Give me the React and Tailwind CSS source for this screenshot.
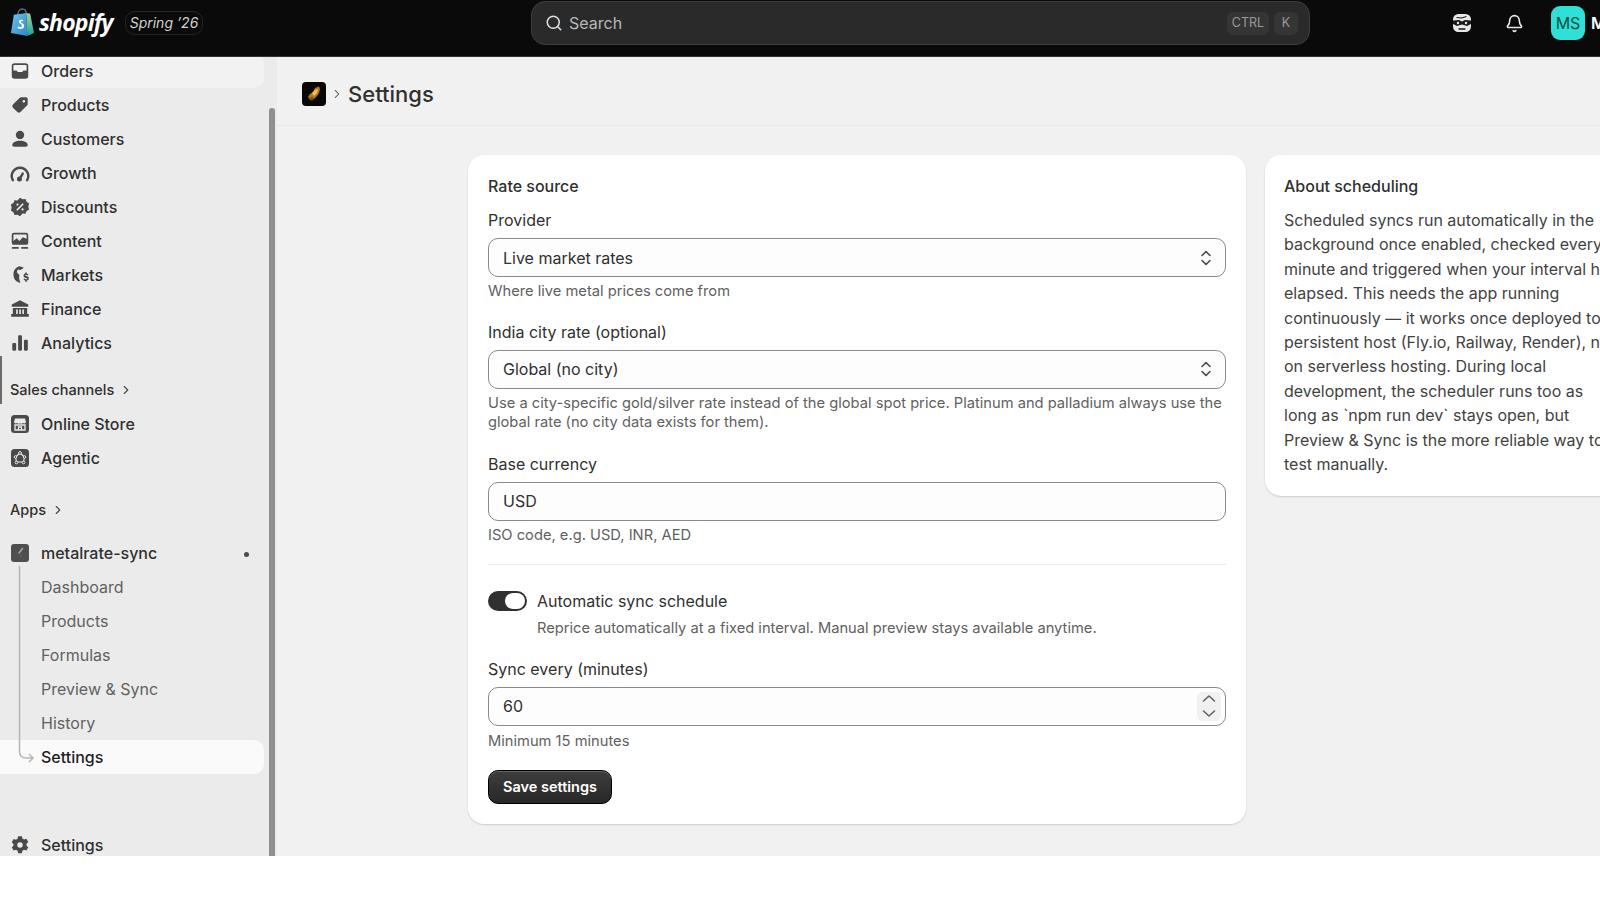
import React from 'react';
import { Search, Bell, ChevronRight } from 'lucide-react';

const ic = 'w-[22px] h-[22px] shrink-0 text-[#4a4a4a]';

const OrdersIcon = () => (
  <svg viewBox="0 0 20 20" className={ic} fill="currentColor">
    <path fillRule="evenodd" d="M5 3h10a2.500 2.500 0 0 1 2.500 2.500v9A2.500 2.500 0 0 1 15 17H5a2.500 2.500 0 0 1-2.500-2.500v-9A2.500 2.500 0 0 1 5 3Zm-1 6.500v-4A1 1 0 0 1 5 4.500h10a1 1 0 0 1 1 1v4h-2.500a1 1 0 0 0-.9.6l-.4.9H7.800l-.4-.9a1 1 0 0 0-.9-.6H4Z" />
  </svg>
);
const TagIcon = () => (
  <svg viewBox="0 0 20 20" className={ic} fill="currentColor">
    <path fillRule="evenodd" d="M11 3h4.500A1.500 1.500 0 0 1 17 4.500V9a2 2 0 0 1-.6 1.400l-6 6a2 2 0 0 1-2.800 0l-4-4a2 2 0 0 1 0-2.800l6-6A2 2 0 0 1 11 3Zm2.500 2.500a1.200 1.200 0 1 0 0 2.400 1.200 1.200 0 0 0 0-2.400Z" />
  </svg>
);
const PersonIcon = () => (
  <svg viewBox="0 0 20 20" className={ic} fill="currentColor">
    <circle cx="10" cy="6.300" r="3.800" />
    <path d="M3 15.500c0-2.600 3-4 7-4s7 1.400 7 4c0 1-.8 1.500-1.700 1.500H4.700C3.800 17 3 16.500 3 15.500Z" />
  </svg>
);
const GrowthIcon = () => (
  <svg viewBox="0 0 20 20" className={ic} fill="none" stroke="currentColor" strokeWidth="2.200" strokeLinecap="round">
    <path d="M3.500 16.500a7.500 7.500 0 1 1 13 0" />
    <path d="M9.500 15.500l3-5" />
    <circle cx="9.500" cy="15.500" r="1.200" fill="currentColor" />
  </svg>
);
const DiscountIcon = () => (
  <svg viewBox="0 0 20 20" className={ic}>
    <path fill="currentColor" d="M10 1.500l2.300 1.500 2.700-.2 1 2.500 2.300 1.500-.7 2.700.7 2.700-2.300 1.500-1 2.500-2.700-.2L10 18.500l-2.300-1.500-2.700.2-1-2.500-2.300-1.500.7-2.700-.7-2.700 2.300-1.500 1-2.500 2.700.2L10 1.500Z" />
    <path d="M7.500 12.500l5-5" stroke="#ebebeb" strokeWidth="1.500" strokeLinecap="round" />
    <circle cx="7.700" cy="7.800" r="1" fill="#ebebeb" />
    <circle cx="12.300" cy="12.200" r="1" fill="#ebebeb" />
  </svg>
);
const ContentIcon = () => (
  <svg viewBox="0 0 20 20" className={ic} fill="currentColor">
    <path fillRule="evenodd" d="M4.500 2.500h11A2 2 0 0 1 17.500 4.500v7a2 2 0 0 1-2 2h-11a2 2 0 0 1-2-2v-7a2 2 0 0 1 2-2Zm-.5 7.500 3-2.500 2.500 2.500 3-3.500L16 8V4.500a.5.5 0 0 0-.5-.5h-11a.5.5 0 0 0-.5.500V10Z" />
    <rect x="2.500" y="15.500" width="6.500" height="1.600" rx=".8" />
    <rect x="11" y="15.500" width="6.500" height="1.600" rx=".8" />
  </svg>
);
const MarketsIcon = () => (
  <svg viewBox="0 0 20 20" className={ic} fill="currentColor">
    <path d="M9 2a8 8 0 0 1 4.500 1.400l-3 2.100-2.500-.5-1 2.500 2.500 2.500c-.6 1.800-.4 4 .8 6.500-.3.300-.5.500-.8.500A8 8 0 0 1 9 2Z" />
    <path d="M15.500 7.500c.4 0 .7.300.7.700v.6c.9.200 1.500.8 1.700 1.500h-1.500c-.2-.3-.5-.5-.9-.5-.5 0-.8.200-.8.500 0 .8 3.300.4 3.300 2.800 0 1-.7 1.700-1.800 1.900v.6a.7.7 0 0 1-1.400 0v-.6c-.9-.2-1.500-.8-1.700-1.600h1.500c.2.300.5.500 1 .500s.9-.2.900-.6c0-1-3.300-.3-3.300-2.700 0-.9.700-1.700 1.600-1.900v-.5c0-.4.300-.7.700-.7Z" />
  </svg>
);
const BankIcon = () => (
  <svg viewBox="0 0 20 20" className={ic} fill="currentColor">
    <path d="M10 2l7.500 3.800V8h-15V5.800L10 2Z" />
    <path fillRule="evenodd" d="M3.500 9h13v5.500H18V17H2v-2.500h1.500V9Zm3 1.500v4h1.500v-4H6.500Zm2.800 0v4h1.500v-4H9.300Zm2.800 0v4h1.500v-4h-1.500Z" />
  </svg>
);
const BarsIcon = () => (
  <svg viewBox="0 0 20 20" className={ic} fill="currentColor">
    <rect x="3" y="10" width="3.500" height="7" rx="1" />
    <rect x="8.300" y="3" width="3.500" height="14" rx="1" />
    <rect x="13.600" y="7" width="3.500" height="10" rx="1" />
  </svg>
);
const StoreIcon = () => (
  <svg viewBox="0 0 20 20" className="w-5 h-5 shrink-0 text-[#4a4a4a]">
    <rect x="1" y="1" width="18" height="18" rx="3.500" fill="currentColor" />
    <path d="M5 4.500h10l1 3.500a1.800 1.800 0 0 1-3 1 2.400 2.400 0 0 1-3 .2 2.400 2.400 0 0 1-3-.2 1.800 1.800 0 0 1-3-1l1-3.500Z" fill="#ebebeb" />
    <path d="M5 11h10v5H5z" fill="none" stroke="#ebebeb" strokeWidth="1.300" />
    <path d="M8.500 16v-3h3v3" fill="none" stroke="#ebebeb" strokeWidth="1.300" />
  </svg>
);
const AgenticIcon = () => (
  <svg viewBox="0 0 20 20" className="w-5 h-5 shrink-0 text-[#4a4a4a]">
    <rect x="1" y="1" width="18" height="18" rx="3.500" fill="currentColor" />
    <path d="M10 5l4.500 4-1 5h-7l-1-5L10 5Z" fill="none" stroke="#ebebeb" strokeWidth="1.100" />
    <circle cx="10" cy="5" r="1.400" fill="#4a4a4a" stroke="#ebebeb" />
    <circle cx="14.500" cy="9" r="1.300" fill="#4a4a4a" stroke="#ebebeb" />
    <circle cx="5.500" cy="9" r="1.300" fill="#4a4a4a" stroke="#ebebeb" />
    <circle cx="13.500" cy="14.500" r="1.300" fill="#4a4a4a" stroke="#ebebeb" />
    <circle cx="6.500" cy="14.500" r="1.300" fill="#4a4a4a" stroke="#ebebeb" />
  </svg>
);
const AppIcon = () => (
  <svg viewBox="0 0 20 20" className="w-5 h-5 shrink-0">
    <rect x="1" y="1" width="18" height="18" rx="3" fill="#4f4f4f" />
    <path d="M12.500 5.500L9 10" stroke="#a8a8a8" strokeWidth="1.500" strokeLinecap="round" />
    <circle cx="11" cy="13" r=".8" fill="#777" />
  </svg>
);
const GearIcon = () => (
  <svg viewBox="0 0 20 20" className={ic} fill="currentColor">
    <path fillRule="evenodd" d="M8.300 2h3.400l.5 2.200 1.500.9 2.100-.7 1.700 2.900-1.600 1.500v1.800l1.600 1.500-1.700 2.900-2.100-.7-1.500.9-.5 2.300H8.300l-.5-2.300-1.500-.9-2.100.7-1.700-2.900 1.600-1.500V9.100L2.500 7.600l1.700-3 2.100.7 1.500-.9L8.300 2ZM10 7.500a2.500 2.500 0 1 0 0 5 2.500 2.500 0 0 0 0-5Z" />
  </svg>
);

const ShopifyBag = () => (
  <svg viewBox="0 0 26 30" className="w-[25px] h-[29px] shrink-0">
    <defs>
      <linearGradient id="bagL" x1="0" y1="0" x2="1" y2="1">
        <stop offset="0" stopColor="#6ec6ea" />
        <stop offset="1" stopColor="#2f86c9" />
      </linearGradient>
      <linearGradient id="bagR" x1="0" y1="0" x2="0" y2="1">
        <stop offset="0" stopColor="#a6d7a0" />
        <stop offset="1" stopColor="#1f9e9a" />
      </linearGradient>
    </defs>
    <path d="M8 8c0-4 2-7 5-7s4 3 4 6" fill="none" stroke="#4a6f8a" strokeWidth="1.500" />
    <path d="M4 7l13-2 1 24L1 26 4 7Z" fill="url(#bagL)" />
    <path d="M17 5l4 1 4 20-7 3-1-24Z" fill="url(#bagR)" />
    <path d="M13.500 12.500c-1-.6-4-.8-4.300 1.500-.3 2.300 3.600 2.500 3.200 4.600-.3 1.500-2.600 1.300-4 .4l-.5 2c1.800 1 6.400 1.300 6.800-2.200.3-2.800-3.500-3-3.300-4.500.1-.9 1.300-.9 2.400-.4l-.3-1.400Z" fill="#fff" />
  </svg>
);

const NuggetIcon = () => (
  <svg viewBox="0 0 24 24" className="w-6 h-6 shrink-0">
    <rect width="24" height="24" rx="4" fill="#0a0805" />
    <path d="M6 15l2-3 3-2 2-4 4-1.500 1 2.500-1 4-2 3-3 3-4 1-2-3Z" fill="#b87a18" />
    <path d="M10 11l3-3 3-1-1 4-3 3-2-3Z" fill="#f0c04a" />
    <path d="M7 16l3-1 2 1-2 3-3-3Z" fill="#7a4f0e" />
  </svg>
);

const SidekickIcon = () => (
  <svg viewBox="0 0 20 20" className="w-[20px] h-[20px] shrink-0">
    <path d="M6.500 1h7A5.500 5.500 0 0 1 19 6.500v7a5.500 5.500 0 0 1-5.500 5.500h-7A5.500 5.500 0 0 1 1 13.500v-7A5.500 5.500 0 0 1 6.500 1Z" fill="#e8e8e8" />
    <path d="M1 7.500l6-.5 3 1.500L13 7l6 .5V11l-4 2-5-1.500L5 13l-4-2V7.500Z" fill="#1a1a1a" />
    <path d="M4.500 4.500l5 .5 5-1.500" stroke="#1a1a1a" strokeWidth="1.100" fill="none" />
    <circle cx="6" cy="10" r="1.200" fill="#e8e8e8" />
    <circle cx="14" cy="10" r="1.200" fill="#e8e8e8" />
    <path d="M7 16h6" stroke="#1a1a1a" strokeWidth="1.300" strokeLinecap="round" />
  </svg>
);

const UpDown = () => (
  <svg viewBox="0 0 12 18" className="w-[12px] h-[18px] shrink-0" fill="none" stroke="#4a4a4a" strokeWidth="1.600" strokeLinecap="round" strokeLinejoin="round">
    <path d="M2 6.500l4-4 4 4" />
    <path d="M2 11.500l4 4 4-4" />
  </svg>
);

const mainNav = [
  ['Orders', OrdersIcon],
  ['Products', TagIcon],
  ['Customers', PersonIcon],
  ['Growth', GrowthIcon],
  ['Discounts', DiscountIcon],
  ['Content', ContentIcon],
  ['Markets', MarketsIcon],
  ['Finance', BankIcon],
  ['Analytics', BarsIcon],
];

const NavRow = ({ label, Icon, active }) => (
  <div className={`flex items-center gap-[10px] h-[34px] pl-[9px] w-[264px] rounded-r-[10px] text-[16px] font-[450] text-[#303030] ${active ? 'bg-[#f2f2f2]' : ''}`}>
    <span className="w-[22px] flex justify-center shrink-0"><Icon /></span>
    <span>{label}</span>
  </div>
);

const SectionLabel = ({ children }) => (
  <div className="flex items-center gap-[5px] pl-[10px] h-[24px] text-[14.500px] font-[450] text-[#303030]">
    {children}
    <ChevronRight className="w-[14px] h-[14px] text-[#4a4a4a]" strokeWidth={2} />
  </div>
);

const Sidebar = () => (
  <aside className="relative w-[277px] shrink-0 bg-[#ebebeb] overflow-hidden flex flex-col">
    <div className="-mt-[3px]">
      {mainNav.map(([label, Icon], i) => (
        <NavRow key={label} label={label} Icon={Icon} active={i === 0} />
      ))}
    </div>
    <div className="mt-[18px]"><SectionLabel>Sales channels</SectionLabel></div>
    <div className="mt-[5px]">
      <NavRow label="Online Store" Icon={StoreIcon} />
      <NavRow label="Agentic" Icon={AgenticIcon} />
    </div>
    <div className="mt-[23px]"><SectionLabel>Apps</SectionLabel></div>
    <div className="mt-[14px] relative">
      <div className="flex items-center h-[34px] pl-[9px] gap-[10px] w-[264px] text-[16px] font-medium text-[#303030]">
        <span className="w-[22px] flex justify-center shrink-0"><AppIcon /></span>
        <span className="flex-1">metalrate-sync</span>
        <span className="w-[5px] h-[5px] rounded-full bg-[#4a4a4a] mr-[15px] mt-[2px]" />
      </div>
      {['Dashboard', 'Products', 'Formulas', 'Preview & Sync', 'History'].map((label) => (
        <div key={label} className="flex items-center h-[34px] pl-[41px] text-[16px] text-[#616161]">{label}</div>
      ))}
      <div className="flex items-center h-[34px] pl-[41px] w-[264px] rounded-r-[10px] bg-[#fafafa] text-[16px] font-medium text-[#1f1f1f]">Settings</div>
      <svg className="absolute left-[16px] top-[30px] w-[20px] h-[200px]" viewBox="0 0 20 200" fill="none" stroke="#b5b5b5" strokeWidth="1.500">
        <path d="M3.500 0V186a6 6 0 0 0 6 6H16" />
        <path d="M13 188l4 4-4 4" />
      </svg>
    </div>
    <div className="mt-[54px]">
      <div className="flex items-center gap-[10px] h-[34px] pl-[9px] text-[16px] text-[#303030] font-medium">
        <span className="w-[22px] flex justify-center shrink-0"><GearIcon /></span>
        <span>Settings</span>
      </div>
    </div>
    <div className="absolute right-[2px] top-[51px] bottom-0 w-[6px] rounded-t-[3px] bg-[#8f8f8f]" />
    <div className="absolute left-0 top-[299px] w-[2px] h-[48px] bg-[#6b6b6b]" />
  </aside>
);

const Label = ({ children }) => <div className="text-[16px] leading-[24px] text-[#303030]">{children}</div>;
const Help = ({ children }) => <div className="text-[14.700px] leading-[19.500px] text-[#616161]">{children}</div>;

const SelectField = ({ value }) => (
  <div className="flex items-center justify-between h-[39px] pl-[14px] pr-[13px] rounded-[10px] border border-[#8a8a8a] bg-[#fdfdfd] text-[16px] text-[#303030]">
    <span>{value}</span>
    <UpDown />
  </div>
);

const App = () => (
  <div className="h-[900px] bg-white font-['Inter',sans-serif] overflow-hidden">
    <div className="h-[856px] flex flex-col overflow-hidden">
      <header className="h-[57px] shrink-0 bg-[#0a0a0a] flex items-start border-b border-[#333]">
        <div className="w-[531px] shrink-0 h-[45px] flex items-center pl-[10px]">
          <ShopifyBag />
          <span className="ml-[4px] w-[75px] whitespace-nowrap text-white text-[23px] font-bold italic font-['Open_Sans',sans-serif] tracking-[-0.8px]">shopify</span>
          <span className="ml-[11px] h-[24px] w-[78px] whitespace-nowrap flex items-center justify-center rounded-[10px] border border-[#252525] text-[14px] italic text-[#d0d0d0]">Spring ’26</span>
        </div>
        <div className="w-[779px] shrink-0 h-[44px] mt-[1px] rounded-[14px] border border-[#3d3d3d] bg-[#2a2a2a] flex items-center pl-[13px] pr-[11px]">
          <Search className="w-[18px] h-[18px] text-[#e0e0e0]" strokeWidth={2} />
          <span className="ml-[6px] flex-1 text-[16px] text-[#b8b8b8]">Search</span>
          <span className="h-[23px] w-[42px] rounded-[6px] bg-[#353535] flex items-center justify-center text-[12.500px] text-[#9a9a9a]">CTRL</span>
          <span className="ml-[5px] h-[23px] w-[24px] rounded-[6px] bg-[#353535] flex items-center justify-center text-[12.500px] text-[#9a9a9a]">K</span>
        </div>
        <div className="flex-1 h-[46px] flex items-center pl-[142px] overflow-hidden">
          <SidekickIcon />
          <Bell className="ml-[33px] w-[19px] h-[19px] shrink-0 text-[#e8e8e8]" strokeWidth={2} />
          <span className="ml-[27px] w-[34px] h-[34px] shrink-0 rounded-[9px] bg-[#2ee0d5] flex items-center justify-center text-[16px] text-[#0c4e4a]">MS</span>
          <span className="ml-[6px] shrink-0 text-[16px] font-semibold text-white whitespace-nowrap">Metal</span>
        </div>
      </header>
      <div className="flex-1 flex min-h-0">
        <Sidebar />
        <main className="flex-1 min-w-0 bg-[#f1f1f1] overflow-hidden">
          <div className="h-[69px] border-b border-[#e8e8e8] flex items-center pl-[25px] pt-[6px]">
            <NuggetIcon />
            <ChevronRight className="ml-[4px] w-[14px] h-[14px] text-[#4a4a4a]" strokeWidth={1.800} />
            <h1 className="ml-[4px] text-[22px] font-medium text-[#303030]">Settings</h1>
          </div>
          <div className="flex items-start gap-[19px] pl-[191px] pt-[29px]">
            <section className="w-[778px] shrink-0 bg-white rounded-[16px] shadow-[0_1px_2px_rgba(0,0,0,0.15)] px-[20px] pt-[19px] pb-[20px]">
              <h2 className="text-[16px] leading-[24px] font-[550] text-[#303030]">Rate source</h2>
              <div className="mt-[10px]"><Label>Provider</Label></div>
              <div className="mt-[6px]"><SelectField value="Live market rates" /></div>
              <div className="mt-[5px]"><Help>Where live metal prices come from</Help></div>
              <div className="mt-[18px]"><Label>India city rate (optional)</Label></div>
              <div className="mt-[6px]"><SelectField value="Global (no city)" /></div>
              <div className="mt-[5px]">
                <Help>Use a city-specific gold/silver rate instead of the global spot price. Platinum and palladium always use the global rate (no city data exists for them).</Help>
              </div>
              <div className="mt-[19px]"><Label>Base currency</Label></div>
              <div className="mt-[6px] flex items-center h-[39px] px-[14px] rounded-[10px] border border-[#8a8a8a] bg-[#fdfdfd] text-[16px] text-[#303030]">USD</div>
              <div className="mt-[5px]"><Help>ISO code, e.g. USD, INR, AED</Help></div>
              <div className="mt-[19px] border-t border-[#ebebeb]" />
              <div className="mt-[24px] flex items-start gap-[10px]">
                <div className="mt-[2px] w-[39px] h-[20px] rounded-full bg-[#303030] flex items-center justify-end pr-[2px]">
                  <span className="w-[20px] h-[16px] rounded-full bg-white" />
                </div>
                <div>
                  <Label>Automatic sync schedule</Label>
                  <div className="mt-[6px]"><Help>Reprice automatically at a fixed interval. Manual preview stays available anytime.</Help></div>
                </div>
              </div>
              <div className="mt-[18px]"><Label>Sync every (minutes)</Label></div>
              <div className="mt-[6px] flex items-center justify-between h-[39px] pl-[14px] pr-[4px] rounded-[10px] border border-[#8a8a8a] bg-[#fdfdfd] text-[16px] text-[#303030]">
                <span>60</span>
                <div className="w-[24px] h-[29px] rounded-[6px] bg-[#f1f1f1] flex items-center justify-center">
                  <svg viewBox="0 0 14 24" className="w-[14px] h-[24px]" fill="none" stroke="#616161" strokeWidth="1.600" strokeLinecap="round" strokeLinejoin="round">
                    <path d="M1.500 7l5.500-5 5.500 5" />
                    <path d="M1.500 17l5.500 5 5.500-5" />
                  </svg>
                </div>
              </div>
              <div className="mt-[6px]"><Help>Minimum 15 minutes</Help></div>
              <button className="mt-[19px] block h-[34px] w-[124px] rounded-[10px] border border-black bg-gradient-to-b from-[#3d3d3d] to-[#282828] shadow-[inset_0_1px_0_rgba(255,255,255,0.2)] text-[14.500px] font-semibold text-white">Save settings</button>
            </section>
            <section className="w-[380px] shrink-0 bg-white rounded-[16px] shadow-[0_1px_2px_rgba(0,0,0,0.15)] pl-[19px] pt-[19px] pb-[20px]">
              <h2 className="text-[16px] leading-[24px] font-[550] text-[#303030]">About scheduling</h2>
              <p className="mt-[10px] w-[340px] text-[16px] leading-[24.400px] text-[#424242]">
                Scheduled syncs run automatically in the background once enabled, checked every minute and triggered when your interval has elapsed. This needs the app running continuously — it works once deployed to a persistent host (Fly.io, Railway, Render), not on serverless hosting. During local development, the scheduler runs too as<br />long as `npm run dev` stays open, but Preview &amp; Sync is the more reliable way to test manually.
              </p>
            </section>
          </div>
        </main>
      </div>
    </div>
  </div>
);

export default App;
